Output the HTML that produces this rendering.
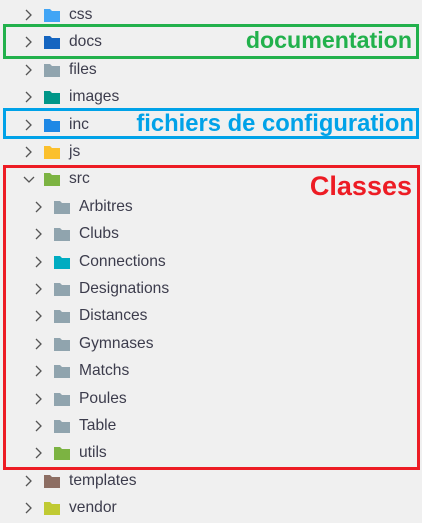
<!DOCTYPE html>
<html><head><style>
body{margin:0;width:422px;height:523px;background:#f0f0f0;position:relative;overflow:hidden;font-family:"Liberation Sans",sans-serif;}
.r{position:absolute;height:20px;line-height:20px;font-size:15.6px;color:#3c3c4c;}
.r svg{position:absolute;top:2px}
.box{position:absolute;border:3px solid;box-sizing:border-box}
.lab{position:absolute;font-weight:bold;right:10px}
</style></head><body>
<div class="box" style="left:3px;top:24px;width:416px;height:35px;border-color:#22b14c"></div>
<div class="box" style="left:3px;top:108px;width:416px;height:31px;border-color:#00a2e8"></div>
<div class="box" style="left:3px;top:165px;width:417px;height:305px;border-color:#ed1c24"></div>
<div class="lab" style="top:27px;font-size:23.2px;color:#22b14c">documentation</div>
<div class="lab" style="top:110px;font-size:23.8px;color:#00a2e8;right:8px">fichiers de configuration</div>
<div class="lab" style="top:171px;font-size:27px;color:#ed1c24">Classes</div>
<div id="t"></div>
<script>
var rows=[
[0,'css','#42a5f5'],[0,'docs','#1565c0'],[0,'files','#90a4ae'],[0,'images','#009688'],[0,'inc','#1e88e5'],[0,'js','#fbc02d'],[0,'src','#7cb342',1],
[1,'Arbitres','#90a4ae'],[1,'Clubs','#90a4ae'],[1,'Connections','#00acc1'],[1,'Designations','#90a4ae'],[1,'Distances','#90a4ae'],[1,'Gymnases','#90a4ae'],[1,'Matchs','#90a4ae'],[1,'Poules','#90a4ae'],[1,'Table','#90a4ae'],[1,'utils','#7cb342'],
[0,'templates','#8d6e63'],[0,'vendor','#c0ca33']];
var h='';
rows.forEach(function(r,i){
 var y=5+i*27.4, x=r[0]?10:0;
 var chev=r[3]?'<path d="M2 6 L7 11 L12 6" fill="none" stroke="#555" stroke-width="1.3"/>':'<path d="M4 3 L9 8 L4 13" fill="none" stroke="#555" stroke-width="1.3"/>';
 h+='<div class="r" style="top:'+y+'px;left:0;width:300px">'+
 '<svg style="left:'+(22+x)+'px" width="14" height="16">'+chev+'</svg>'+
 '<svg style="left:'+(43+x)+'px" width="18" height="16"><path d="M1 2h6l2 2h8v11H1z" fill="'+r[2]+'"/></svg>'+
 '<span style="position:absolute;left:'+(69+x)+'px">'+r[1]+'</span></div>';
});
document.getElementById('t').innerHTML=h;
</script>
</body></html>
